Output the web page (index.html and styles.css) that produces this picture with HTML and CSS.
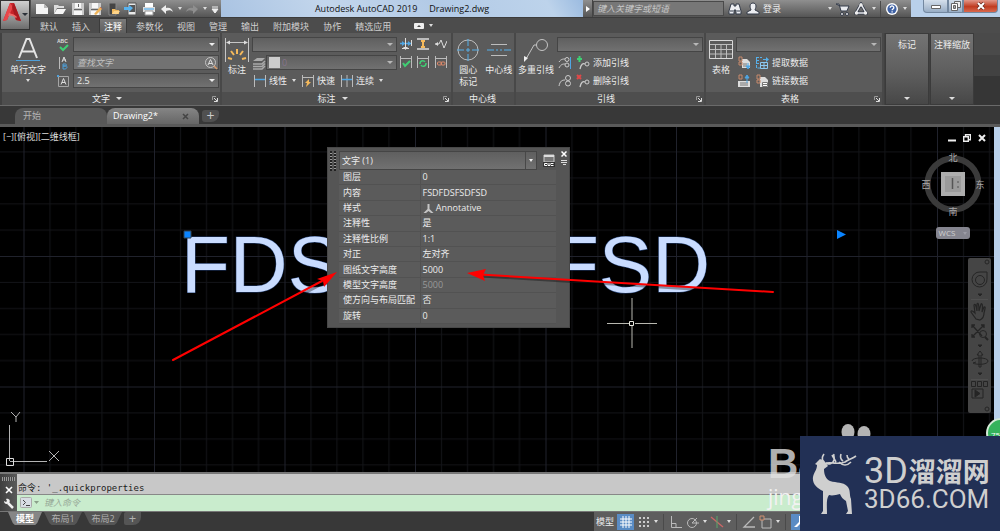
FILE: index.html
```html
<!DOCTYPE html>
<html lang="zh-CN">
<head>
<meta charset="utf-8">
<title>Autodesk AutoCAD 2019 Drawing2.dwg</title>
<link rel="stylesheet" href="styles.css">
</head>
<body>
<div class="app">
  <header class="header">
    <button class="logo" aria-label="应用程序菜单">
      <svg width="30" height="30" viewBox="0 0 30 30"><path d="M3 21 10 3h4l7 18-5-1-2-5H9l-2 5z" fill="#c7242b"/><path d="M10 3 3 21l4-1 6-13z" fill="#e8474a"/><path d="M14 3l7 18-5-1-4-13z" fill="#a91a20"/><path d="M9 13c3 1 5 1 8 4l-1 1c-2-2-5-3-8-2z" fill="#ef6a68"/><path d="M22 13h6l-3 3z" fill="#2b3038"/></svg>
    </button>
    <div class="titlebar">
      <div class="qat">
        <button class="tool" aria-label="新建"><svg width="14" height="14" viewBox="0 0 14 14"><path d="M1 2h8l4 4v6H1z" fill="#f4f4f4"/><path d="M9 2v4h4" fill="#b8b8b8"/></svg></button>
        <button class="tool" aria-label="打开"><svg width="14" height="14" viewBox="0 0 14 14"><path d="M1 12V3h4l1 1h5v2H4z" fill="#ddd"/><path d="M4 7h9l-3 5H1z" fill="#f6f6f6"/></svg></button>
        <button class="tool" aria-label="保存"><svg width="14" height="14" viewBox="0 0 14 14"><path d="M1 1h12v12H1z" fill="#c9c9c9"/><path d="M4 1h6v5H4zM3 9h8v4H3z" fill="#f7f7f7"/><path d="M3 7h8v1H3zM7 2h1v3H7z" fill="#666"/></svg></button>
        <button class="tool" aria-label="另存为"><svg width="14" height="14" viewBox="0 0 14 14"><path d="M1 1h12v12H1z" fill="#c9c9c9"/><path d="M4 1h6v5H4zM3 9h8v4H3z" fill="#f7f7f7"/><path d="M3 7h8v1H3z" fill="#666"/><path d="M6 12l6-7 2 2-6 6z" fill="#efb45a"/><path d="M12 5l2 2" stroke="#c75" /></svg></button>
        <button class="tool" aria-label="从移动设备打开"><svg width="14" height="14" viewBox="0 0 14 14"><path d="M3 1h7v12H3z" fill="#444" stroke="#888"/><path d="M6 12V7h3l1 1h3v4z" fill="#f0b85c"/><path d="M6 12l2-3h6l-2 3z" fill="#ffd58a"/></svg></button>
        <button class="tool" aria-label="保存到移动设备"><svg width="14" height="14" viewBox="0 0 14 14"><path d="M4 1h8v12H4z" fill="#e9e9e9" stroke="#555"/><path d="M5 3h6v7H5z" fill="#555"/><path d="M0 5h5V3l4 3-4 4V8H0z" fill="#58b2ee"/></svg></button>
        <button class="tool" aria-label="打印"><svg width="14" height="14" viewBox="0 0 14 14"><path d="M3 1h8v5H3z" fill="#fff"/><path d="M1 5h12v5H1z" fill="#ddd"/><path d="M2 6h10v2H2z" fill="#8cc3ea"/><path d="M3 9h8v4H3z" fill="#fff" stroke="#999"/></svg></button>
        <button class="tool" aria-label="放弃"><svg width="14" height="14" viewBox="0 0 14 14"><path d="M1 7l5-4v3c4-1 6 1 7 4-2-2-4-2-7-1v3z" fill="#eee"/></svg></button>
        <i class="caret"></i>
        <button class="tool" aria-label="重做"><svg width="14" height="14" viewBox="0 0 14 14"><path d="M13 7L8 3v3C4 5 2 7 1 10c2-2 4-2 7-1v3z" fill="#8f8f8f"/></svg></button>
        <i class="caret"></i>
        <button class="tool" aria-label="自定义"><svg width="8" height="14" viewBox="0 0 8 14"><path d="M1 5h6M1 7h6l-3 4z" stroke="#eee" fill="#eee"/></svg></button>
      </div>
      <h1 class="title"><span>Autodesk AutoCAD 2019</span><span>Drawing2.dwg</span></h1>
      <div class="infocenter">
        <div class="info-box">
          <button class="info-arrow" aria-label="展开"><svg width="6" height="8" viewBox="0 0 6 8"><path d="M1 1l4 3-4 3z" fill="#fff"/></svg></button>
          <input class="info-search" type="search" aria-label="搜索" placeholder="键入关键字或短语">
        </div>
        <button class="tool" aria-label="查找"><svg width="14" height="14" viewBox="0 0 14 14"><path d="M3 2h3v2h2V2h3l2 7v3H8V8H6v4H1V9z" fill="#eceef2" stroke="#333a48"/><path d="M2 9h3M9 9h3" stroke="#333a48"/></svg></button>
        <button class="login"><svg width="14" height="14" viewBox="0 0 14 14"><path d="M4 4c0-4 6-4 6 0 0 2-1 3-1 4l4 2v2H1v-2l4-2c0-1-1-2-1-4z" fill="#eceef2" stroke="#333a48"/></svg>登录</button>
        <i class="caret"></i>
        <button class="tool" aria-label="应用商店"><svg width="14" height="14" viewBox="0 0 14 14"><path d="M0 2h3l2 7h6l2-5H4z" fill="#e8eaee" stroke="#333a48" stroke-width="1"/><circle cx="6" cy="12" r="1.500" fill="#eee" stroke="#333a48"/><circle cx="11" cy="12" r="1.500" fill="#eee" stroke="#333a48"/></svg></button>
        <button class="tool" aria-label="联机"><svg width="14" height="14" viewBox="0 0 14 14"><path d="M7 2l5 9H2z" fill="none" stroke="#333a48" stroke-width="3"/><path d="M7 2l5 9H2z" fill="none" stroke="#e6e8ed" stroke-width="1.500"/><circle cx="7" cy="3" r="1.700" fill="#eee"/><circle cx="2.500" cy="11" r="1.700" fill="#eee"/><circle cx="11.500" cy="11" r="1.700" fill="#eee"/></svg></button>
        <i class="caret"></i>
        <span class="vsep"></span>
        <button class="tool" aria-label="帮助"><svg width="14" height="14" viewBox="0 0 14 14"><circle cx="7" cy="7" r="6" fill="#fff"/><circle cx="7" cy="7" r="4.600" fill="#3f62a5"/><path d="M5.200 5.700c0-2.400 3.700-2.200 3.600 0 0 1.200-1.700 1.300-1.700 2.500M7.100 9.200v1.300" fill="none" stroke="#fff" stroke-width="1.300"/></svg></button>
        <i class="caret"></i>
      </div>
      <div class="winbtns">
        <button class="win" aria-label="最小化"><svg width="12" height="8" viewBox="0 0 12 8"><path d="M1.500 3.500h9v3h-9z" fill="#fff" stroke="#666"/></svg></button>
        <button class="win win-mid" aria-label="还原"><svg width="10" height="10" viewBox="0 0 10 10"><path d="M3.500.5h6v6h-6z" fill="#eee" stroke="#666"/><path d="M.5 2.500h6v7h-6z" fill="#fff" stroke="#666"/><path d="M2.500 4.500h2v3h-2z" fill="#aaa" stroke="#666"/></svg></button>
        <button class="win win-close" aria-label="关闭"><svg width="10" height="8" viewBox="0 0 10 8"><path d="M2 1l6 6M8 1L2 7" stroke="#6b2a20" stroke-width="3.500"/><path d="M2 1l6 6M8 1L2 7" stroke="#fff" stroke-width="2"/></svg></button>
      </div>
    </div>
    <nav class="menu">
      <a href="#">默认</a><a href="#">插入</a><a href="#" class="current">注释</a><a href="#">参数化</a><a href="#">视图</a><a href="#">管理</a><a href="#">输出</a><a href="#">附加模块</a><a href="#">协作</a><a href="#">精选应用</a>
      <button class="menu-more" aria-label="最小化功能区"><svg width="10" height="6" viewBox="0 0 10 6"><rect width="10" height="6" rx="1" fill="#eee"/><path d="M3 4h4L5 2z" fill="#444"/></svg><i class="caret"></i></button>
    </nav>
  </header>

  <section class="ribbon">
    <div class="panel p-text">
      <div class="body">
        <button class="big"><svg width="26" height="26" viewBox="0 0 26 26"><path d="M4 21L11.500 2h3L22 21M7 14.500h12" fill="none" stroke="#e4e4e4" stroke-width="2"/><path d="M1 23.500h24" stroke="#4f9fd8"/></svg><span>单行文字</span><i class="caret"></i></button>
        <div class="rows">
          <div class="row"><svg class="ic" width="14" height="14" viewBox="0 0 14 14"><text x="1" y="5" class="tiny-abc">ABC</text><path d="M4 9l3 3 5-5" fill="none" stroke="#3fcf73" stroke-width="2"/></svg><span class="combo"><select aria-label="文字样式"><option></option></select></span></div>
          <div class="row"><svg class="ic" width="14" height="14" viewBox="0 0 14 14"><path d="M3.500 1v12" stroke="#bbb"/><path d="M6 6l2-5 2 5M7 4h3" stroke="#ddd" fill="none"/><path d="M7 8h2c2 0 2 2 0 2H7zm0 2h3c2 0 1 3-1 3H7z" stroke="#4f9fd8" fill="none"/></svg><span class="find"><input type="text" aria-label="查找文字" placeholder="查找文字"><svg width="14" height="14" viewBox="0 0 14 14"><circle cx="6.500" cy="6.500" r="5" fill="none" stroke="#c4c4c4"/><path d="M4 9l2.500-5.500L9 9M5 7.500h3" fill="none" stroke="#ddd"/><path d="M10 10l3 3" stroke="#d79a6a" stroke-width="1.500"/></svg></span></div>
          <div class="row"><svg class="ic" width="14" height="14" viewBox="0 0 14 14"><path d="M2.500 2.500h10v10h-10z" fill="none" stroke="#a5a5a5"/><path d="M5 10.500l2.500-6 2.500 6M6 8.500h3" fill="none" stroke="#ddd"/><path d="M1 1h2v2H1z" fill="#4f9fd8"/></svg><span class="combo"><select aria-label="文字高度"><option>2.5</option></select></span></div>
        </div>
      </div>
      <div class="foot"><span>文字<i class="caret"></i></span><svg class="launch" width="6" height="6" viewBox="0 0 6 6"><path d="M.5 4V.5H4" fill="none" stroke="#999"/><path d="M2 2l3 3M5.500 2v3.500H2" fill="none" stroke="#ddd"/></svg></div>
    </div>

    <div class="panel p-dim">
      <div class="body">
        <button class="big"><svg width="26" height="26" viewBox="0 0 26 26"><path d="M1.500 1v24M24.500 1v24M3 5.500h20" stroke="#c6c6c6"/><path d="M2 5.500l4-2v4zM24 5.500l-4-2v4z" fill="#ddd"/><path d="M13 12v5M7 14l3 4M19 14l-3 4M4 21l4 1M22 21l-4 1" stroke="#f5b95b" stroke-width="2"/></svg><span>标注</span></button>
        <div class="rows">
          <div class="row"><span class="combo dim"><select aria-label="标注样式"><option></option></select></span></div>
          <div class="row"><svg class="ic" width="14" height="14" viewBox="0 0 14 14"><path d="M5 2h8l-3 3H1z" fill="#aaa"/><path d="M1 8h9l3-3M1 10.500h9l3-3M1 13h9l3-3" fill="none" stroke="#aaa" stroke-width="1.500"/></svg><span class="combo dim swatch"><select aria-label="图层"><option>0</option></select></span></div>
          <div class="row links">
            <button><svg width="12" height="12" viewBox="0 0 12 12"><path d="M.5 0v12M11.500 0v12" stroke="#bbb"/><path d="M1 4.500h10" stroke="#4fa6e4" stroke-width="1.500"/></svg>线性<i class="caret"></i></button>
            <button><svg width="12" height="12" viewBox="0 0 12 12"><path d="M.5 0v12M11.500 0v12M1 2.500h10" stroke="#bbb"/><path d="M7 4L3 8h2l-1 4 5-5H7z" fill="#f5b95b"/></svg>快速</button>
            <button><svg width="12" height="12" viewBox="0 0 12 12"><path d="M.5 0v12M6 0v12M11.500 0v12" stroke="#bbb"/><path d="M1 4.500h10" stroke="#4fa6e4" stroke-width="1.500"/></svg>连续<i class="caret"></i></button>
          </div>
        </div>
        <div class="minis">
          <button aria-label="调整间距"><svg width="12" height="12" viewBox="0 0 12 12"><path d="M0 5.500h12" stroke="#4fa6e4" stroke-width="1.500"/><path d="M5.500 0v10M11.500 2v6M2 10.500h7" stroke="#ddd"/><path d="M5 5.500L2 3v5zM11 5.500L8 3v5z" fill="#4fa6e4"/><path d="M3 9l2.500 3L8 9z" fill="#ddd"/></svg></button>
          <button aria-label="打断"><svg width="12" height="12" viewBox="0 0 12 12"><path d="M0 1h12M0 11h12" stroke="#ddd" stroke-width="1.500"/><path d="M6 2v8M4 3h4M4 9h4" stroke="#f5b95b" stroke-width="2"/></svg></button>
          <button aria-label="折弯标注"><svg width="12" height="12" viewBox="0 0 12 12"><path d="M0 6h4l2-4 3 8 3-7" fill="none" stroke="#ddd"/><path d="M0 6l3-2v4z" fill="#ddd"/></svg></button>
          <button aria-label="检验"><svg width="12" height="12" viewBox="0 0 12 12"><path d="M.5 0v12M11.500 0v12M1 2.500h10" stroke="#bbb"/><path d="M3 7l2 3 5-5" fill="none" stroke="#3fcf73" stroke-width="2"/></svg></button>
          <button aria-label="更新"><svg width="12" height="12" viewBox="0 0 12 12"><path d="M.5 0v12M11.500 0v12M1 2.500h10" stroke="#bbb"/><path d="M3 8c0-4 4-4 5-2M9 7c0 4-4 4-5 2" fill="none" stroke="#3fcf73" stroke-width="1.500"/></svg></button>
          <button aria-label="重新关联"><svg width="12" height="12" viewBox="0 0 12 12"><path d="M.5 0v12M11.500 0v12M1 2.500h10" stroke="#bbb"/><rect x="2.500" y="6" width="4" height="3" rx="1" fill="none" stroke="#e08a6a"/><rect x="6" y="6" width="4" height="3" rx="1" fill="none" stroke="#e08a6a"/></svg></button>
        </div>
      </div>
      <div class="foot"><span>标注<i class="caret"></i></span><svg class="launch" width="6" height="6" viewBox="0 0 6 6"><path d="M.5 4V.5H4" fill="none" stroke="#999"/><path d="M2 2l3 3M5.500 2v3.500H2" fill="none" stroke="#ddd"/></svg></div>
    </div>

    <div class="panel p-center">
      <div class="body">
        <button class="big"><svg width="26" height="26" viewBox="0 0 26 26"><circle cx="13" cy="13" r="10" fill="none" stroke="#bdbdbd"/><path d="M13 2v7m0 2v4m0 2v7M2 13h7m2 0h4m2 0h7" stroke="#56b0ea"/></svg><span>圆心<br>标记</span></button>
        <button class="big"><svg width="26" height="26" viewBox="0 0 26 26"><path d="M5 7.500h16M5 18.500h16" stroke="#bdbdbd"/><path d="M1 13h7m2 0h2m2 0h2m2 0h7" stroke="#56b0ea"/></svg><span>中心线</span></button>
      </div>
      <div class="foot"><span>中心线</span></div>
    </div>

    <div class="panel p-leader">
      <div class="body">
        <button class="big"><svg width="26" height="26" viewBox="0 0 26 26"><circle cx="19" cy="8" r="5.500" fill="none" stroke="#c4c4c4"/><path d="M13.500 8H11L3 22" fill="none" stroke="#c4c4c4"/><path d="M1 25l0-6 4 2z" fill="#eee"/></svg><span>多重引线</span></button>
        <div class="rows">
          <div class="row"><span class="combo dim"><select aria-label="多重引线样式"><option></option></select></span></div>
          <div class="row links"><button aria-label="对齐"><svg width="14" height="14" viewBox="0 0 14 14"><path d="M1 6c2-3 4-3 6-3M1 12c2-4 4-4 6-4" fill="none" stroke="#ccc"/><circle cx="9" cy="3.500" r="2" fill="none" stroke="#ccc"/><circle cx="9" cy="9" r="2" fill="none" stroke="#ccc"/><path d="M12.500 1v12" stroke="#4fa6e4"/></svg></button><button><svg width="14" height="14" viewBox="0 0 14 14"><path d="M1 3h5M3.500 0v6" stroke="#3fcf73" stroke-width="2"/><path d="M4 13c1-5 3-6 5-5" fill="none" stroke="#ccc" stroke-width="1.300"/><circle cx="11" cy="8" r="2" fill="none" stroke="#ccc"/></svg>添加引线</button></div>
          <div class="row links"><button aria-label="合并"><svg width="14" height="14" viewBox="0 0 14 14"><path d="M1 12c1-5 3-6 6-6" fill="none" stroke="#ccc"/><circle cx="10" cy="4" r="2.500" fill="none" stroke="#ccc"/><circle cx="10" cy="9.500" r="2.500" fill="none" stroke="#ccc"/></svg></button><button><svg width="14" height="14" viewBox="0 0 14 14"><path d="M1 1l4 4M5 1L1 5" stroke="#e04848" stroke-width="2"/><path d="M4 13c1-5 3-6 5-5" fill="none" stroke="#ccc" stroke-width="1.300"/><circle cx="11" cy="8" r="2" fill="none" stroke="#ccc"/></svg>删除引线</button></div>
        </div>
      </div>
      <div class="foot"><span>引线</span><svg class="launch" width="6" height="6" viewBox="0 0 6 6"><path d="M.5 4V.5H4" fill="none" stroke="#999"/><path d="M2 2l3 3M5.500 2v3.500H2" fill="none" stroke="#ddd"/></svg></div>
    </div>

    <div class="panel p-table">
      <div class="body">
        <button class="big"><svg width="26" height="26" viewBox="0 0 26 26"><path d="M1.500 3.500h23v18h-23z" fill="none" stroke="#d8d8d8"/><path d="M2 7.500h22M2 12.500h22M2 17h22M7.500 8v13M13 8v13M18.500 8v13" fill="none" stroke="#bdbdbd"/></svg><span>表格</span></button>
        <div class="rows">
          <div class="row"><span class="combo dim"><select aria-label="表格样式"><option></option></select></span></div>
          <div class="row links"><button aria-label="从源下载"><svg width="14" height="14" viewBox="0 0 14 14"><path d="M5 3h5l3 3v6H5z" fill="#ddd"/><path d="M2 1h3v4H2zM2 6h3v3H2z" fill="none" stroke="#c78a6c"/><path d="M6 8h4M6 10h4" stroke="#777"/><path d="M11 7v4M9 10l2 3 2-3z" stroke="#4fa6e4" fill="#4fa6e4"/></svg></button><button><svg width="14" height="14" viewBox="0 0 14 14"><path d="M1 1.500h6M1 4.500h4M1 7.500h4M1.500 1v11h4" fill="none" stroke="#56b0ea" stroke-dasharray="3 1"/><path d="M8 3h3V1l3 2.500L11 6V4H8z" fill="#56b0ea"/><path d="M5.500 6.500h7v6h-7zM5.500 9.500h7M9 6.500v6" fill="none" stroke="#8ccaf3"/></svg>提取数据</button></div>
          <div class="row links"><button aria-label="上载到源"><svg width="14" height="14" viewBox="0 0 14 14"><path d="M1 7h12v6H1z" fill="#ddd"/><path d="M2 1h3v4H2z" fill="none" stroke="#c78a6c"/><path d="M3 9h8M3 11h8" stroke="#777"/><path d="M10 9V4M8 4l2-3 2 3z" stroke="#4fa6e4" fill="#4fa6e4"/></svg></button><button><svg width="14" height="14" viewBox="0 0 14 14"><path d="M5 3h5l3 3v7H5z" fill="#ddd"/><path d="M2 1h3v4H2zM2 6h3v3H2z" fill="none" stroke="#c78a6c"/><path d="M7.500 8.500h5v4h-5zM7.500 10.500h5" fill="#fff" stroke="#777"/></svg>链接数据</button></div>
        </div>
      </div>
      <div class="foot"><span>表格</span><svg class="launch" width="6" height="6" viewBox="0 0 6 6"><path d="M.5 4V.5H4" fill="none" stroke="#999"/><path d="M2 2l3 3M5.500 2v3.500H2" fill="none" stroke="#ddd"/></svg></div>
    </div>
    <button class="collapsed">标记<i class="caret"></i></button>
    <button class="collapsed">注释缩放<i class="caret"></i></button>
    <div class="ribbon-rest"></div>
  </section>

  <nav class="files">
    <a href="#" class="file">开始</a>
    <a href="#" class="file active">Drawing2*<svg width="7" height="7" viewBox="0 0 7 7"><path d="M1 1l5 5M6 1L1 6" stroke="#444" stroke-width="1.500"/></svg></a>
    <button class="file-add" aria-label="新图形">+</button>
  </nav>

  <main class="canvas">
    <svg class="drawing" width="1000" height="346" viewBox="0 0 1000 346">
      <defs>
        <pattern id="grid" x="23.500" y="-1.500" width="130.500" height="130.500" patternUnits="userSpaceOnUse">
          <path d="M26.500 0v131M52.500 0v131M78.500 0v131M104.500 0v131M0 26.500h131M0 52.500h131M0 78.500h131M0 104.500h131" stroke="#131418"/>
          <path d="M.5 0v131M0 .5h131" stroke="#20222c"/>
        </pattern>
      </defs>
      <rect width="1000" height="346" fill="url(#grid)"/>
      <text class="cad-text" x="181" y="165">FDS</text>
      <text class="cad-text" x="550" y="165">FSD</text>
      <path d="M184 104h7v7h-7z" fill="#0a84ff" stroke="#345"/>
      <path d="M837 103l9 4.500-9 4.500z" fill="#0a84ff"/>
      <path d="M607 196.500h22m6 0h22M632 171v22m0 6v22" stroke="#b8b8b0"/>
      <path d="M629.500 194.500h4v4h-4z" fill="none" stroke="#e8e8e0"/>
      <path d="M9.500 298v36M10 334.500h37" stroke="#b4b4b4"/>
      <path d="M6.500 331.500h7v7h-7z" fill="none" stroke="#ddd"/>
      <path d="M11 285l5 5 4-5M16 290v5M49 324l10 10M59 324l-10 10" fill="none" stroke="#b4b4b4"/>
    </svg>
    <a href="#" class="view-label">[−][俯视][二维线框]</a>
    <div class="docbtns">
      <button aria-label="最小化"><svg width="8" height="8" viewBox="0 0 8 8"><path d="M0 6.500h8" stroke="#eee" stroke-width="2"/></svg></button>
      <button aria-label="还原"><svg width="8" height="8" viewBox="0 0 8 8"><path d="M2.500 2V.7h5v5H6M.7 2.700h4.600v4.600H.7z" fill="none" stroke="#eee" stroke-width="1.400"/></svg></button>
      <button aria-label="关闭"><svg width="8" height="8" viewBox="0 0 8 8"><path d="M1 1l6 6M7 1L1 7" stroke="#eee" stroke-width="2"/></svg></button>
    </div>
    <svg class="viewcube" width="68" height="68" viewBox="0 0 68 68">
      <circle cx="34" cy="34" r="25.500" fill="none" stroke="#3a3a3a" stroke-width="6"/>
      <path d="M22 22h24v24H22z" fill="#adadad"/><path d="M26 26h16v16H26z" fill="#9b9b9b"/><path d="M33.500 28v11" stroke="#555" stroke-width="1.500"/><path d="M38 32h2M38 37h2" stroke="#555"/>
      <text x="34" y="11">北</text><text x="34" y="65">南</text><text x="7" y="38">西</text><text x="61" y="38">东</text>
    </svg>
    <button class="wcs">WCS<i class="caret"></i></button>
    <div class="navbar">
      <svg width="23" height="155" viewBox="0 0 23 155" fill="none" stroke="#252525">
        <circle cx="19" cy="4" r="2"/>
        <path d="M12 14h7v7a7.500 7.500 0 1 1-7-7z"/><circle cx="12" cy="22" r="4.500"/>
        <path d="M10 36h4l-2 2z" fill="#252525"/>
        <path d="M3 41.500h17M3 121.500h17" stroke="#505050"/>
        <path d="M8 61l-5-7c0-2 2-1 4 1l-1-8c1-2 2 0 3 6V46c1-2 2 0 2 7l2-7c1-1 2 0 1 8l2-5c2-1 1 2 0 6 0 4-2 6-4 7z" stroke-width="1.200"/>
        <path d="M4 67l10 11M16 67L4 79M4 70v-3h3M13 67h3v3M4 76v3h3" stroke-width="1.300"/><circle cx="15" cy="76" r="3.500"/><path d="M17 79l3 3" stroke-width="2"/>
        <path d="M10 87h4l-2 2z" fill="#252525"/>
        <path d="M11 109V97H9l3-4 3 4h-2v12zM4 103c0-4 16-4 16 0s-12 4-15 2l3-1"/>
        <path d="M10 115h4l-2 2z" fill="#252525"/>
        <path d="M3.500 123.500h4v5h-4zM9.500 123.500h4v5h-4zM15.500 123.500h4v5h-4zM4 131h11v9H4z"/><path d="M7 132l5 3.500-5 3.500z" fill="#252525"/>
        <circle cx="19" cy="151" r="2"/>
      </svg>
    </div>

    <section class="props">
      <div class="grip"></div>
      <div class="props-main">
        <div class="props-head"><span class="combo"><select aria-label="对象类型"><option>文字 (1)</option></select></span><button aria-label="自定义界面"><svg width="12" height="13" viewBox="0 0 12 13"><path d="M1 1h10v7H1z" fill="#777" stroke="#ccc"/><path d="M1 1h10v2H1z" fill="#ddd"/><path d="M0 8h12v5H0z" fill="#333"/><path d="M4 9.500H1.500v2H4M5 9v2.500h2V9M8 9.500h2.500M8 11.500h2.500" stroke="#fff" fill="none"/></svg></button></div>
        <table>
          <tr><th>图层</th><td>0</td></tr>
          <tr><th>内容</th><td>FSDFDSFSDFSD</td></tr>
          <tr><th>样式</th><td><svg width="11" height="10" viewBox="0 0 11 10"><path d="M4.500 0h2v5l4 4H8L5.500 7 3 9H.5l4-4z" fill="#c4c4c4"/></svg> Annotative</td></tr>
          <tr><th>注释性</th><td>是</td></tr>
          <tr><th>注释性比例</th><td>1:1</td></tr>
          <tr><th>对正</th><td>左对齐</td></tr>
          <tr><th>图纸文字高度</th><td>5000</td></tr>
          <tr><th>模型文字高度</th><td class="muted">5000</td></tr>
          <tr><th>使方向与布局匹配</th><td>否</td></tr>
          <tr><th>旋转</th><td>0</td></tr>
        </table>
      </div>
      <div class="props-side">
        <button aria-label="关闭"><svg width="6" height="6" viewBox="0 0 6 6"><path d="M.5.5l5 5M5.500.5l-5 5" stroke="#fff" stroke-width="1.500"/></svg></button>
        <button aria-label="选项"><svg width="6" height="6" viewBox="0 0 6 6"><path d="M0 1.500h6M0 3.500h6M2 5.500h3" stroke="#ddd"/></svg></button>
      </div>
    </section>

    <svg class="arrows" width="1000" height="346" viewBox="0 0 1000 346">
      <path d="M174 235L320 158M774 167L482 149" stroke="#000" stroke-width="3" opacity=".35"/>
      <path d="M173 233L322 154M773 165L480 147.500" stroke="#f00" stroke-width="2" stroke-linecap="round"/>
      <path d="M337 145l-13 15-1-6-6-2zM467 146l19-4-3 6 2 6z" fill="#f00"/>
    </svg>
  </main>

  <section class="command">
    <div class="cmd-side">
      <span class="dots"></span>
      <button aria-label="关闭"><svg width="8" height="8" viewBox="0 0 8 8"><path d="M1 1l6 6M7 1L1 7" stroke="#fff" stroke-width="1.600"/></svg></button>
      <button aria-label="自定义"><svg width="12" height="12" viewBox="0 0 12 12"><path d="M5 5l5 5" stroke="#eee" stroke-width="2.500"/><path d="M1 3l2 1 1-1-1-2c3-1 5 2 3 4S1 6 1 3z" fill="#eee"/></svg></button>
    </div>
    <div class="cmd-main">
      <p class="history">命令: '_.quickproperties</p>
      <label class="cmd-line"><svg width="20" height="12" viewBox="0 0 20 12"><rect x=".5" y=".5" width="11" height="10" rx="1" fill="#d8dde4" stroke="#aaa"/><path d="M3 3l2.500 2.500L3 8M6 8.500h4" fill="none" stroke="#444"/><path d="M14 4h5l-2.500 3z" fill="#8aa08a"/></svg><input type="text" aria-label="命令" placeholder="键入命令"></label>
    </div>
  </section>

  <footer class="status">
    <nav class="layouts">
      <a href="#" class="layout on">模型</a><a href="#" class="layout">布局1</a><a href="#" class="layout">布局2</a><button class="layout" aria-label="新建布局">+</button>
    </nav>
    <div class="statusbar">
      <button class="st-model">模型</button>
      <button class="lit" aria-label="栅格"><svg width="14" height="14" viewBox="0 0 14 14"><path d="M4 1v12M7 1v12M10 1v12M1 4h12M1 7h12M1 10h12" stroke="#fff"/></svg></button>
      <button aria-label="捕捉"><svg width="14" height="14" viewBox="0 0 14 14"><path d="M2 3h10M2 7h10M2 11h10" stroke="#ccc" stroke-width="2" stroke-dasharray="2 2"/></svg></button><i class="caret"></i>
      <span class="vsep"></span>
      <button aria-label="正交"><svg width="14" height="14" viewBox="0 0 14 14"><path d="M2.500 1v11.500H13M3 8.500h4v4" fill="none" stroke="#bbb"/></svg></button>
      <button aria-label="极轴"><svg width="14" height="14" viewBox="0 0 14 14"><circle cx="6" cy="8" r="4.500" fill="none" stroke="#bbb"/><path d="M6 8h7M6 8l5-5" stroke="#bbb"/></svg></button><i class="caret"></i>
      <button aria-label="等轴测"><svg width="14" height="14" viewBox="0 0 14 14"><path d="M1 2l12 10" stroke="#c66" stroke-width="1.300"/><path d="M7 1v12" stroke="#5aa86a"/></svg></button><i class="caret"></i>
      <span class="vsep"></span>
      <button aria-label="追踪"><svg width="14" height="14" viewBox="0 0 14 14"><path d="M12 2L2 12h11" fill="none" stroke="#bbb" stroke-width="1.300"/></svg></button>
      <button aria-label="对象捕捉"><svg width="14" height="14" viewBox="0 0 14 14"><path d="M3 4h9v9H3z" fill="none" stroke="#bbb"/><path d="M1 1h4v4H1z" fill="#606060" stroke="#d09070"/></svg></button><i class="caret"></i>
      <span class="vsep"></span>
      <button class="lit" aria-label="注释"><svg width="14" height="14" viewBox="0 0 14 14"><path d="M6 1h2v6l5 5h-3L7 9l-3 3H1l5-5z" fill="#fff"/></svg></button>
    </div>
  </footer>

  <div class="badge">75</div>
  <div class="baidu">
    <svg width="34" height="20" viewBox="0 0 34 20"><ellipse cx="10" cy="9" rx="6.500" ry="8" fill="#b4b4b4"/><ellipse cx="26" cy="11" rx="6.500" ry="8" fill="#b4b4b4"/></svg>
    <strong>Ba</strong><span>jing</span>
  </div>
  <div class="brand">
    <svg width="48" height="64" viewBox="0 0 48 64" fill="#cfcfcf"><path d="M4 12l5-5c1 1 4 0 5 3l3 4-4 3c0 6 2 10 6 12 7 2 13 1 17 5 4 4 2 8 4 13l1 15h-6l2-3-2-10c-3-2-5-4-6-7-4 1-8 2-11 1-3 4-2 11-2 19h-6l2-3V39C6 36 1 32 2 25c1-5 4-7 4-12z"/><path d="M12 10c-1-4-1-5 1-8M13 11c5 2 9 1 10-3 1-3-1-4 0-6M15 11c9-1 12 2 19-1 4-3 7-3 11-6M25 10l-4-7M32 9c-3-2-3-4-2-7M38 7c-2-1-2-3-2-4M28 10c4 4 8 4 12 0" fill="none" stroke="#cfcfcf" stroke-width="1.600"/></svg>
    <div class="brand-text"><div class="brand-name"><span>3D</span><b>溜溜网</b></div><div class="brand-url">3D66.COM</div></div>
  </div>
</div>
</body>
</html>
```
FILE: styles.css
```css
* { box-sizing: border-box; }
body { margin: 0; background: #383838; color: #ececec; font: 9px/12px "Open Sans", "Noto Sans CJK SC", sans-serif; }
button, input, select { font: inherit; color: inherit; margin: 0; padding: 0; border: 0; background: none; }
button { display: inline-flex; align-items: center; justify-content: center; }
a { color: inherit; text-decoration: none; }
svg { display: block; flex: none; }
.caret { flex: none; display: inline-block; width: 0; height: 0; border: 2px solid transparent; border-top: 3px solid #ddd; border-bottom: 0; }
.app { position: relative; min-height: 100vh; display: flex; flex-direction: column; overflow: hidden; }

/* header */
.header { display: grid; grid-template-columns: 31px 1fr; grid-template-rows: 18px 15px; background: #4c4c4c; }
.logo { grid-row: span 2; align-self: start; width: 30px; height: 30px; background: linear-gradient(#cfcfcf, #6d6d6d); border: 1px solid #333; }
.titlebar { display: flex; background: #b3cbe6; border-bottom: 1px solid #3c3c3c; }
.qat { flex: none; width: 190px; display: flex; align-items: center; justify-content: space-between; padding: 0 2px 0 4px; background: linear-gradient(#8f8f8f, #555); }
.title { flex: 1; margin: 0; display: flex; justify-content: center; align-items: center; gap: 12px; color: #101010; font-size: 9px; font-weight: 400; background: linear-gradient(60deg, #a9c3e2, #c3d6ec 30%, #b2cae6 60%, #bdd3eb 90%, #9bbbe0); white-space: nowrap; }
.infocenter { flex: none; width: 328px; display: flex; align-items: center; gap: 4px; padding-right: 4px; background: linear-gradient(#8f8f8f, #555); }
.info-box { display: flex; align-items: center; }
.info-arrow { width: 10px; height: 17px; border-right: 1px solid #444; }
.info-search { width: 131px; height: 15px; padding: 0 3px; background: #777; border: 1px solid #4a4a4a; border-radius: 0; appearance: none; }
.info-search::placeholder { color: #c8c8c8; font-style: italic; opacity: 1; }
.login { gap: 3px; margin-right: auto; }
.vsep { flex: none; width: 1px; height: 16px; background: #4a4a4a; }
.winbtns { flex: none; width: 89px; display: flex; justify-content: flex-end; padding-right: 2px; background: #b9d0ea; }
.win { height: 13px; width: 25px; border: 1px solid #7388a0; border-top: 0; border-radius: 0 0 0 4px; background: linear-gradient(#d5e0ec, #98adc5); }
.win-mid { width: 15px; border-radius: 0; }
.win-close { width: 35px; border-radius: 0 0 4px 0; background: linear-gradient(#e2988a, #c03b20 55%, #d9694f); }
.menu { display: flex; align-items: stretch; padding-left: 2px; }
.menu a { padding: 2px 5px 0; margin: 0 2px; line-height: 13px; color: #d0d0d0; }
.menu .current { background: linear-gradient(#7a7a7a, #5e5e5e); color: #fff; border: 1px solid #3b3b3b; border-bottom: 0; padding: 1px 4px 0; }
.menu-more { gap: 5px; margin-left: 16px; }

/* ribbon */
.ribbon { display: flex; padding-left: 2px; background: #414141; border-bottom: 1px solid #6a6a6a; }
.panel { flex: none; display: flex; flex-direction: column; background: #5b5b5b; border-right: 2px solid #484848; }
.p-text { width: 220px; }
.p-dim { width: 231px; }
.p-center { width: 63px; }
.p-leader { width: 190px; }
.p-table { width: 178px; }
.body { display: flex; height: 59px; padding: 4px 1px 0 2px; }
.big { flex: none; flex-direction: column; justify-content: flex-start; align-self: flex-start; width: 26px; line-height: 12px; white-space: nowrap; }
.big span { padding-top: 1px; }
.big .caret { margin-top: 3px; }
.p-text .big { width: 48px; }
.p-center .body { justify-content: space-around; padding: 4px 0 0; }
.p-leader .big { width: 36px; }
.rows { flex: 1; display: flex; flex-direction: column; gap: 3px; min-width: 0; }
.p-dim .rows { margin-left: 2px; }
.p-leader .rows { margin-left: 3px; }
.row { display: flex; align-items: center; height: 15px; gap: 3px; }
.p-dim .row, .p-leader .row { gap: 0; }
.p-text .ic { margin-left: 4px; }
.tiny-abc { font: bold 5px "Liberation Sans", sans-serif; fill: #ddd; }
.combo { position: relative; flex: 1; display: flex; height: 15px; background: linear-gradient(#5f5f5f, #717171); border: 1px solid #454545; }
.combo select { flex: 1; width: 100%; appearance: none; padding: 0 3px; outline: 0; }
.combo::after { content: ""; position: absolute; right: 3px; top: 5px; border: 3px solid transparent; border-top-color: #eee; border-bottom: 0; pointer-events: none; }
.dim::after { border-top-color: #b8b8b8; }
.swatch select { color: #85738a; padding-left: 15px; }
.swatch::before { content: ""; position: absolute; left: 2px; top: 1px; width: 11px; height: 11px; background: #ccc; }
.find { flex: 1; display: flex; align-items: center; height: 15px; background: #727272; border: 1px solid #484848; }
.find input { flex: 1; min-width: 0; padding: 0 3px; }
.find input::placeholder { color: #c0c0c0; font-style: italic; opacity: 1; }
.links { padding-left: 2px; }
.links button { gap: 3px; white-space: nowrap; }
.p-dim .links { gap: 6px; }
.p-dim .links .caret { margin-left: 2px; }
.p-leader .links, .p-table .links { gap: 4px; padding-left: 1px; }
.p-table .rows { margin-left: 2px; }
.minis { flex: none; width: 53px; display: grid; grid-template-columns: repeat(3, 1fr); grid-auto-rows: 18px; align-items: start; justify-items: center; padding-top: 1px; }
.foot { display: flex; align-items: center; height: 13px; background: #4e4e4e; padding-right: 2px; }
.foot span { flex: 1; display: flex; align-items: center; justify-content: center; gap: 6px; }
.foot .caret { border-width: 3px; border-bottom: 0; }
.collapsed { flex: none; width: 44px; margin-left: 1px; flex-direction: column; justify-content: space-between; padding: 5px 0 4px; background: linear-gradient(#737373, #5c5c5c 60%, #474747); border: 1px solid #3b3b3b; }
.collapsed .caret { border-width: 3px; border-bottom: 0; }
.ribbon-rest { flex: 1; background: linear-gradient(#4a4a4a 30%, #424242 30% 60%, #363636 60%); }

/* file tabs */
.files { display: flex; align-items: flex-end; height: 21px; padding-left: 15px; background: #383838; border-bottom: 3px solid #5a5a5a; }
.file { display: flex; align-items: center; justify-content: space-between; width: 92px; height: 16px; padding: 0 10px 0 8px; color: #b4b4b4; background: #585858; border-radius: 8px 8px 0 0; }
.active { padding-left: 6px; color: #fff; background: linear-gradient(#858585, #666); }
.file-add { width: 17px; height: 12px; margin: 0 0 2px 3px; font-size: 14px; color: #ccc; background: #505050; border-radius: 3px 3px 8px 3px; }

/* drawing area */
.canvas { position: relative; flex: 1; min-height: 345px; background: #000; border-right: 6px solid #b9d0ea; overflow: hidden; }
.drawing, .arrows { position: absolute; left: 0; top: 0; pointer-events: none; }
.cad-text { font: 80px "Liberation Sans", sans-serif; fill: #c9dcff; stroke: #243f70; stroke-width: 1px; paint-order: stroke; }
.view-label { position: absolute; left: 3px; top: 4px; color: #ddd; }
.docbtns { position: absolute; right: 8px; top: 7px; display: flex; gap: 7px; }
.viewcube { position: absolute; right: 7px; top: 23px; }
.viewcube text { font: 9px "Noto Sans CJK SC", sans-serif; fill: #a8a8a8; text-anchor: middle; }
.wcs { position: absolute; right: 24px; top: 100px; width: 34px; height: 12px; gap: 8px; background: #85858f; color: #d0d0d0; border-radius: 3px; font-size: 8px; }
.wcs .caret { border-top-color: #9c9ca6; }
.navbar { position: absolute; right: 3px; top: 131px; width: 23px; height: 155px; background: #454545; border-radius: 2px; }
.badge { position: absolute; right: -16px; bottom: 83px; width: 30px; height: 30px; padding: 9px 0 0 3px; border: 2px solid #d5ead8; border-radius: 50%; background: #35b35c; color: #fff; font-size: 8px; }

/* quick properties palette */
.props { position: absolute; left: 327px; top: 20px; width: 243px; display: flex; gap: 3px; padding: 3px 1px 3px 2px; background: #555; border: 1px solid #484848; }
.grip { flex: none; width: 6px; height: 20px; background: repeating-linear-gradient(90deg, transparent 0 2px, #555 2px 4px), repeating-linear-gradient(#222 0 2px, #999 2px 3px); }
.props-main { flex: 1; }
.props-head { display: flex; align-items: flex-start; gap: 6px; }
.props-head .combo { height: 19px; }
.props-head select { padding-left: 2px; }
.props-head .combo::after { top: 7px; border-width: 2px; border-top-width: 3px; border-bottom: 0; }
.props-head .combo::before { content: ""; position: absolute; right: 10px; top: 0; bottom: 0; width: 1px; background: #484848; }
.props-head button { margin: 3px 1px 0 0; }
.props table { width: 100%; height: 154px; border-collapse: collapse; background: #5b5b5b; line-height: 12px; }
.props th, .props td { padding: 0 0 0 4px; font-weight: 400; text-align: left; border-bottom: 1px solid #525252; white-space: nowrap; }
.props th { width: 81px; border-right: 1px solid #525252; }
.props td { padding-left: 2px; }
.props td svg { display: inline-block; vertical-align: middle; }
.props .muted { color: #999; }
.props-side { display: flex; flex-direction: column; gap: 2px; width: 9px; align-items: center; }

/* command window */
.command { display: flex; border-top: 2px solid #777; border-bottom: 1px solid #777; }
.cmd-side { flex: none; width: 17px; display: flex; flex-direction: column; align-items: center; justify-content: space-between; padding: 3px 0 1px; background: linear-gradient(90deg, #3e3e3e, #5a5a5a); }
.dots { width: 13px; height: 4px; background: repeating-linear-gradient(90deg, #999 0 1px, #444 1px 2px); }
.cmd-main { flex: 1; }
.history { margin: 0; height: 21px; padding: 7px 0 0 1px; background: #c8c8c8; color: #1b1b1b; border-bottom: 1px solid #888; font: 9px/14px "DejaVu Sans Mono", "Noto Sans CJK SC", monospace; }
.cmd-line { display: flex; align-items: center; gap: 4px; height: 16px; padding-left: 3px; background: #c9eccd; }
.cmd-line input { flex: 1; color: #333; }
.cmd-line input::placeholder { color: #97a897; font-style: italic; opacity: 1; }

/* status row */
.status { display: flex; align-items: flex-start; height: 19px; background: #383838; }
.layouts { flex: none; width: 594px; display: flex; gap: 2px; padding-left: 8px; }
.layout { width: 38px; height: 13px; line-height: 13px; text-align: center; color: #b0b0b0; background: #555; clip-path: polygon(0 0, 100% 0, 86% 85%, 80% 100%, 20% 100%, 14% 85%); }
.on { width: 34px; color: #fff; background: #868686; font-weight: 700; }
button.layout { width: 17px; font-size: 13px; clip-path: none; border-radius: 2px 0 8px 2px; }
.statusbar { flex: 1; display: flex; align-items: center; gap: 3px; height: 19px; padding-left: 2px; background: #5e5e5e; }
.statusbar button { flex: none; min-width: 14px; height: 16px; }
.statusbar .lit { width: 17px; background: #5a8cc4; }
.statusbar .vsep { margin: 0 2px; }

/* watermarks */
.baidu { position: absolute; right: 128px; bottom: 0; width: 104px; height: 108px; display: flex; flex-direction: column; pointer-events: none; }
.baidu svg { align-self: flex-end; }
.baidu strong { font: bold 42px/42px "Liberation Sans", sans-serif; color: rgba(225, 225, 225, .8); }
.baidu span { font: 21px/24px "Open Sans", sans-serif; color: #f2f2f2; }
.brand { position: absolute; right: 0; bottom: 0; width: 200px; height: 95px; display: flex; align-items: center; gap: 5px; padding-left: 11px; background: #223055; color: #cfcfcf; }
.brand-name { display: flex; align-items: center; gap: 1px; }
.brand-name span { font: 36px/30px Roboto, sans-serif; }
.brand-name b { font: 700 27px/30px "Noto Sans CJK SC", sans-serif; }
.brand-url { font: 26px/26px Roboto, sans-serif; }
```
